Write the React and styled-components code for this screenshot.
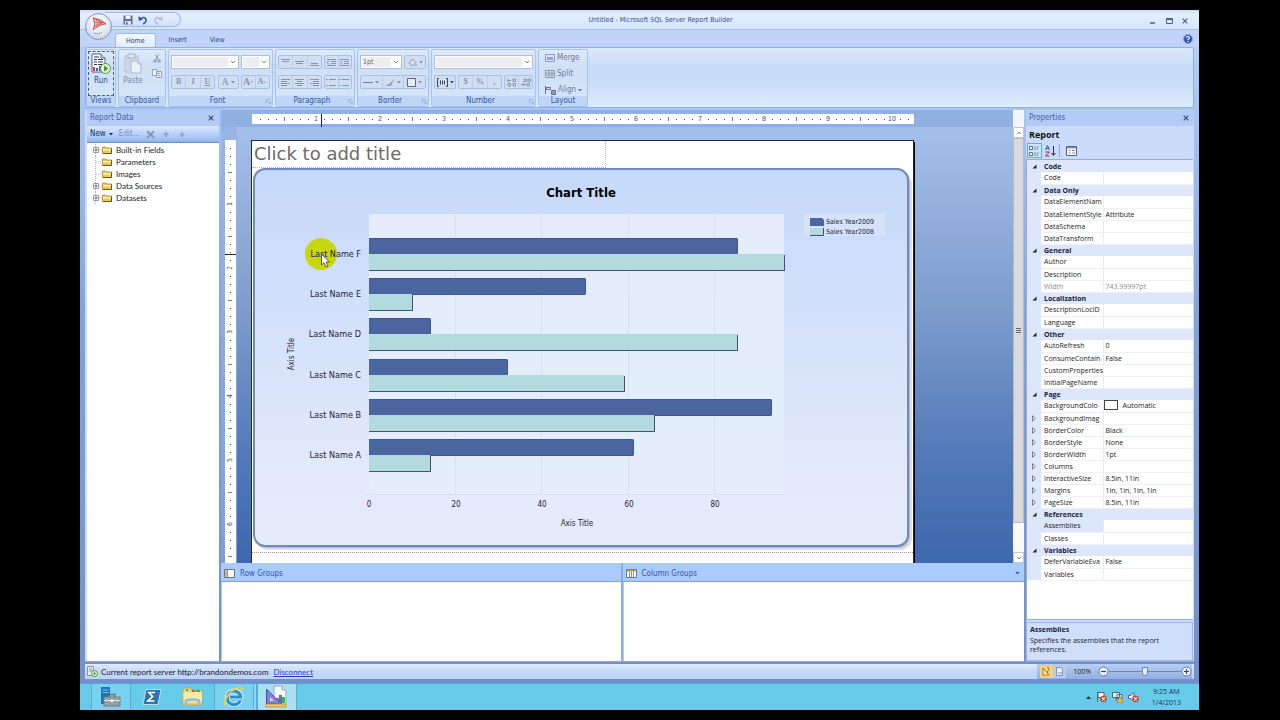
import { useState } from "react";
import { styled, createGlobalStyle, css } from "styled-components";

const TAHOMA = `"DejaVu Sans Condensed", "DejaVu Sans", Tahoma, sans-serif`;
const SEGOE = `"Open Sans", "Noto Sans", sans-serif`;

const GlobalStyle = createGlobalStyle`
    * { box-sizing: border-box; }
    html, body { margin: 0; background: #000; }
    body { font-family: ${TAHOMA}; font-size: 7px; line-height: 10px; color: #222; }
    button, select, input { font: inherit; color: inherit; margin: 0; padding: 0; border: 0; background: none; }
    svg { display: block; flex: none; }
`;

/* ---------- shell ---------- */
const Screen = styled.div`
    display: flex;
    flex-direction: column;
    height: 100vh;
    padding: 10px 81px 10px 80px;
    overflow: hidden;
`;
const Window = styled.div`
    position: relative;
    flex: 1;
    min-height: 0;
    display: flex;
    flex-direction: column;
    padding: 0 5px 4px;
    background: linear-gradient(#bdd3f8 0, #a9c5f4 100px, #84a2dc 300px, #728fcb);
`;
const TitleBar = styled.header`
    display: grid;
    grid-template-columns: 96px 1fr 54px;
    align-items: center;
    height: 20px;
    margin: 0 -5px;
    padding: 0 5px;
    background: linear-gradient(#c9dcfb, #e3eefd 4px, #d7e6fb);
    border-bottom: 1px solid #a3bfee;
`;
const QuickAccess = styled.div`
    display: flex;
    align-items: center;
    gap: 5px;
    height: 15px;
    margin-left: 20px;
    padding-left: 18px;
    border: 1px solid #9db8e6;
    border-left: 0;
    border-radius: 0 8px 8px 0;
    background: linear-gradient(#e8f1fd, #cfe0fa);
`;
const IconButton = styled.button`
    display: grid;
    place-items: center;
    opacity: ${(p) => (p.$faded ? 0.45 : 1)};
`;
const Title = styled.h1`
    margin: 0;
    text-align: center;
    font-size: 7px;
    font-weight: normal;
    color: #2f4f92;
`;
const WindowButtons = styled.div`
    display: flex;
    justify-content: space-between;
    padding: 3px 6px 0 10px;
`;
const Orb = styled.button`
    position: absolute;
    top: 3px;
    left: 5px;
    width: 27px;
    height: 27px;
    border: 1px solid #8497b8;
    border-radius: 50%;
    background: radial-gradient(circle at 50% 35%, #fff, #dfe4ee 60%, #aebbd3);
    display: grid;
    place-items: center;
`;
const TabRow = styled.nav`
    display: flex;
    align-items: flex-end;
    gap: 3px;
    height: 17px;
    margin: 0 -5px;
    padding: 0 6px 0 35px;
    background: #bfd4f8;
`;
const Tab = styled.button`
    height: 14px;
    padding: 0 10px;
    font-size: 7px;
    color: #2a4a8c;
    border-radius: 3px 3px 0 0;
    ${(p) => p.$active && css`
        background: linear-gradient(#f2f7fe, #e0ecfc);
        border: 1px solid #9dbaeb;
        border-bottom: 0;
    `}
`;
const HelpButton = styled(IconButton)`
    margin-left: auto;
    align-self: center;
`;

/* ---------- ribbon ---------- */
const Ribbon = styled.div`
    display: flex;
    gap: 2px;
    height: 61px;
    padding: 1px 1px 0 0;
    border: 1px solid #8eb0e8;
    border-radius: 3px;
    background: linear-gradient(#dbe8fb, #c9dcf7 30%, #c9def8 60%, #ddedfe);
`;
const GroupBox = styled.section`
    display: flex;
    flex-direction: column;
    width: ${(p) => p.$width}px;
    border: 1px solid #a9c4ec;
    border-radius: 2px;
    background: linear-gradient(#dfeafa, #cfdff5 30%, #d6e6fa);
    overflow: hidden;
`;
const bodyPadding = { row: "1px 1px 0", list: "3px 2px 0", tools: "5px 2px 0" };
const GroupBody = styled.div`
    flex: 1;
    min-height: 0;
    display: flex;
    flex-direction: ${(p) => (p.$kind === "row" ? "row" : "column")};
    gap: 6px;
    padding: ${(p) => bodyPadding[p.$kind]};
`;
const GroupLabel = styled.h2`
    margin: 0;
    height: 10px;
    font-size: 8px;
    font-weight: normal;
    line-height: 10px;
    text-align: center;
    color: #2f56a0;
    background: #c0d6f6;
    display: flex;
    align-items: center;
    span { flex: 1; }
`;
const BigButton = styled.button`
    display: flex;
    flex-direction: column;
    align-items: center;
    gap: 2px;
    width: 26px;
    padding-top: 1px;
    font-size: 8px;
    color: ${(p) => (p.$on ? "#2a4a8c" : "#7d8aa5")};
    border: ${(p) => (p.$on ? "1px dashed #4d5f80" : "1px solid transparent")};
`;
const SmallStack = styled.div`
    display: flex;
    flex-direction: column;
    gap: 6px;
    padding-top: 3px;
`;
const ToolRow = styled.div`
    display: flex;
    justify-content: space-between;
    height: 14px;
`;
const ToolSet = styled.div`
    display: flex;
    width: ${(p) => p.$width}px;
    border: 1px solid #a9bfe3;
    border-radius: 2px;
    background: #cfdef3;
`;
const Tool = styled.button`
    flex: 1;
    display: flex;
    align-items: center;
    justify-content: center;
    gap: ${(p) => (p.$tight ? 0 : 2)}px;
    color: ${(p) => (p.$dark ? "#3b4456" : "#8a94a8")};
    border-right: 1px solid #bccde8;
    &:last-child { border-right: 0; }
`;
const Glyph = styled.span`
    font-family: "Liberation Serif", serif;
    font-size: ${(p) => (p.$big ? 10 : 8)}px;
    font-weight: ${(p) => (p.$plain ? "normal" : "bold")};
    font-style: ${(p) => (p.$italic ? "italic" : "normal")};
    text-decoration: ${(p) => (p.$under ? "underline" : "none")};
`;
const ComboBox = styled.div`
    position: relative;
    width: ${(p) => p.$width}px;
    border: 1px solid #aebfda;
    background: #eeeef0;
    box-shadow: inset 0 0 0 1px #fff;
`;
const ComboSelect = styled.select`
    appearance: none;
    display: block;
    width: 100%;
    height: 12px;
    padding-left: 2px;
    color: #666;
`;
const ComboArrow = styled.span`
    position: absolute;
    inset: 0 0 0 auto;
    width: 10px;
    display: grid;
    place-items: center;
    background: #fff;
    pointer-events: none;
`;
const LayoutButton = styled.button`
    display: flex;
    align-items: center;
    gap: 2px;
    height: 10px;
    padding-left: 4px;
    color: #6d7a95;
    font-size: 8px;
`;

/* ---------- work area ---------- */
const Workspace = styled.main`
    flex: 1;
    min-height: 0;
    display: grid;
    grid-template-columns: 134px minmax(0, 1fr) 168px;
    gap: 2px;
    padding: 2px 0;
`;
const Pane = styled.aside`
    display: flex;
    flex-direction: column;
    min-height: 0;
    padding-left: ${(p) => (p.$left ? 2 : 0)}px;
    background: #cbdcfa;
    border-bottom: 1px solid #8fa9dc;
`;
const PaneHeader = styled.div`
    display: flex;
    align-items: center;
    justify-content: space-between;
    height: 16px;
    padding: 0 5px 0 3px;
    color: #4560a8;
    background: #b3cbf5;
`;
const PaneTitle = styled.h2`
    margin: 0;
    font-size: 8px;
    font-weight: normal;
`;
const DataToolbar = styled.div`
    display: flex;
    align-items: center;
    gap: 6px;
    height: 17px;
    padding: 0 3px;
    font-size: 8px;
    color: #1d2f58;
    background: linear-gradient(#dbe8fc, #a9c8f7 70%, #8db3ee);
    border-bottom: 1px solid #6d8dc6;
`;
const DataButton = styled.button`
    display: flex;
    align-items: center;
    gap: 3px;
    color: ${(p) => (p.disabled ? "#8592ad" : "inherit")};
`;
const Tree = styled.ul`
    flex: 1;
    margin: 0;
    padding: 1px 0 0 6px;
    list-style: none;
    background: #fff;
    font-family: Lato, sans-serif;
    font-size: 8px;
`;
const TreeItem = styled.li`
    display: flex;
    align-items: center;
    height: 12px;
`;
const TreeLabel = styled.span`
    margin-left: 4px;
`;

const Center = styled.div`
    display: flex;
    flex-direction: column;
    min-width: 0;
    min-height: 0;
`;
const Designer = styled.div`
    flex: 1;
    min-height: 0;
    display: grid;
    grid-template-columns: 16px minmax(0, 1fr) 11px;
    grid-template-rows: 17px minmax(0, 1fr);
    background: #8fafe0;
`;
const TopRuler = styled.div`
    grid-column: 1 / 3;
    padding: 4px 0 0 31px;
    overflow: hidden;
    background: #90b0e1;
`;
const SideRuler = styled.div`
    padding: 13px 0 0 4px;
    overflow: hidden;
    background: linear-gradient(#98b6e5, #7d9fd6);
`;
const ScrollBar = styled.div`
    grid-column: 3;
    grid-row: 1 / 3;
    display: flex;
    flex-direction: column;
    padding-top: 17px;
    background: #f3f5f9;
`;
const ScrollButton = styled.button`
    display: grid;
    place-items: center;
    height: 11px;
    background: #fff;
    border: 1px solid #c3c9d4;
    color: #555;
`;
const ScrollThumb = styled.div`
    flex: 384;
    display: grid;
    place-items: center;
    background: #d9dadd;
    border: 1px solid #b7bac2;
`;
const ScrollRest = styled.div`
    flex: 29;
    background: #fafafa;
`;
const Surface = styled.div`
    overflow: hidden;
    padding: 13px 0 0 14px;
    background: linear-gradient(#a5bfeb, #97b3e0 15%, #7c9ccc 42%, #5379b8 75%, #3c68ae);
`;
const Paper = styled.div`
    width: 663px;
    height: 100%;
    min-height: 423px;
    background: #fff;
    border: 1px solid #23283a;
    border-bottom: 0;
    box-shadow: 1px 2px 0 #000;
`;
const ReportTitle = styled.div`
    width: 354px;
    height: 27px;
    padding: 0 2px;
    border: 1px dotted #b4b4b4;
    border-width: 0 1px 1px 0;
    font-family: "DejaVu Sans", Verdana, sans-serif;
    font-size: 18px;
    line-height: 26px;
    color: #6c6a66;
`;
const Footer = styled.div`
    border-top: 1px dotted #b08a92;
`;
const ChartSvg = styled.svg`
    text { font-family: ${TAHOMA}; fill: #1d2338; }
`;

const Groups = styled.div`
    display: grid;
    grid-template-columns: 1fr 1fr;
    height: 99px;
    background: #a9cbfd;
    border-bottom: 1px solid #8fa9dc;
`;
const GroupPane = styled.section`
    display: flex;
    flex-direction: column;
    border-right: 2px solid #8fabdf;
    &:last-child { border-right: 0; }
`;
const GroupHead = styled.div`
    display: flex;
    align-items: center;
    gap: 5px;
    height: 19px;
    padding: 3px 4px 0 3px;
    font-size: 8px;
    color: #3259a6;
    border-bottom: 1px solid #7f9fd8;
    svg:last-child { margin-left: ${(p) => (p.$menu ? "auto" : 0)}; }
`;
const GroupList = styled.div`
    flex: 1;
    margin-left: 1px;
    background: #fff;
`;

/* ---------- properties ---------- */
const PropsName = styled.h3`
    margin: 0;
    padding: 2px 3px 0;
    height: 16px;
    font-family: ${SEGOE};
    font-size: 9px;
    line-height: 13px;
    color: #111;
`;
const PropsTools = styled.div`
    display: flex;
    align-items: center;
    gap: 1px;
    height: 17px;
    padding: 0 1px;
`;
const PropTool = styled.button`
    display: grid;
    place-items: center;
    width: 15px;
    height: 15px;
    border: 1px solid ${(p) => (p.$on ? "#58b4d6" : "transparent")};
    background: ${(p) => (p.$on ? "#c9e6f8" : "none")};
`;
const Divider = styled.span`
    width: 1px;
    height: 13px;
    margin-right: 3px;
    background: #8fa9dc;
`;
const GridBox = styled.div`
    flex: 1;
    min-height: 0;
    margin-right: 1px;
    overflow: hidden;
    background: #fff;
    border: 1px solid #93add9;
    border-right: 0;
`;
const PropTable = styled.table`
    width: 100%;
    table-layout: fixed;
    border-collapse: collapse;
    font-family: ${SEGOE};
    font-size: 7px;
    th, td {
        height: 12px;
        padding: 0;
        line-height: 11px;
        text-align: left;
        font-weight: normal;
        white-space: nowrap;
        overflow: hidden;
    }
`;
const Gutter = styled.td`
    background: #dce7fb;
    svg { margin: 0 auto; }
`;
const CategoryName = styled.th`
    &&& { padding-left: 3px; font-weight: bold; background: #dce7fb; color: #1a2238; }
`;
const PropName = styled.th`
    &&& { padding-left: 3px; }
    border-bottom: 1px solid #eef0f4;
    color: ${(p) => (p.$dim ? "#8b8b8b" : "#222")};
    background: ${(p) => (p.$picked ? "#dce7fb" : "none")};
`;
const PropValue = styled.td`
    &&& { padding-left: ${(p) => (p.$swatch ? 0 : 2)}px; }
    border-left: 1px solid #e9ecf2;
    border-bottom: 1px solid #eef0f4;
    color: ${(p) => (p.$dim ? "#8b8b8b" : "#222")};
`;
const Swatch = styled.span`
    display: inline-block;
    width: 14px;
    height: 10px;
    margin-right: 5px;
    vertical-align: top;
    border: 1px solid #444;
    background: #fff;
`;
const Help = styled.div`
    height: 39px;
    margin: 2px 1px 0 0;
    padding: 2px 3px;
    border: 1px solid #9db7e6;
    background: #cfdffa;
    font-family: ${SEGOE};
    line-height: 9px;
    color: #1a2238;
`;
const HelpTitle = styled.h4`
    margin: 0 0 2px;
    font-size: 7px;
`;
const HelpText = styled.p`
    margin: 0;
`;

/* ---------- status bar and taskbar ---------- */
const StatusBar = styled.footer`
    display: flex;
    align-items: center;
    justify-content: space-between;
    height: 15px;
    padding: 0 2px;
    background: linear-gradient(#e1ecfc, #c3d9f9 50%, #bdd4f7);
    font-family: ${SEGOE};
`;
const ServerInfo = styled.div`
    display: flex;
    align-items: center;
    gap: 3px;
    font-family: Lato, sans-serif;
    font-size: 8px;
`;
const ServerLink = styled.a`
    margin-left: 2px;
    color: #2b3fc0;
`;
const ZoomArea = styled.div`
    display: flex;
    align-items: center;
    align-self: stretch;
    gap: 7px;
    padding-left: 3px;
    background: linear-gradient(#b9cef2, #93afe2);
`;
const ViewButtons = styled.div`
    display: flex;
`;
const ViewButton = styled.button`
    display: grid;
    place-items: center;
    width: 13px;
    height: 12px;
    background: ${(p) => (p.$on ? "#fbcf72" : "#b7ccf0")};
`;
const ZoomControl = styled.div`
    display: flex;
    align-items: center;
`;
const ZoomButton = styled.button`
    display: grid;
    place-items: center;
    width: 11px;
    height: 11px;
`;
const ZoomRange = styled.input`
    appearance: none;
    width: 72px;
    height: 10px;
    background: linear-gradient(#6d86b8, #6d86b8) center / 100% 1px no-repeat;
    &::-webkit-slider-thumb {
        appearance: none;
        width: 6px;
        height: 9px;
        border: 1px solid #6d86b8;
        border-radius: 1px 1px 3px 3px;
        background: #e6eefb;
    }
`;
const Taskbar = styled.footer`
    display: flex;
    align-items: stretch;
    height: 27px;
    padding: 0 18px 0 11px;
    background: #66cae9;
    border-top: 1px solid #5f9fd2;
`;
const TaskButton = styled.button`
    display: grid;
    place-items: center;
    width: 40px;
    margin-right: 1px;
    background: ${(p) => (p.$current ? "#a8e1f3" : p.$open ? "#7ad1ed" : "none")};
    border: solid ${(p) => (p.$open ? "#4fb0d6" : "transparent")};
    border-width: 0 1px;
    box-shadow: ${(p) => (p.$stack ? "2px 0 0 #8ad8f0, 3px 0 0 #4fb0d6" : "none")};
    &:last-of-type { margin-left: 2px; }
`;
const Tray = styled.div`
    margin-left: auto;
    display: flex;
    align-items: center;
    gap: 5px;
`;
const Clock = styled.time`
    margin-left: 8px;
    font-family: ${SEGOE};
    font-size: 7px;
    line-height: 11px;
    text-align: center;
    color: #123a52;
`;

/* ---------- icons ---------- */
const Arrow = ({ size = 4, color = "currentColor" }) => (
    <svg width={size} height="3" viewBox="0 0 4 3"><path d="M0 0h4L2 2.5z" fill={color} /></svg>
);
const Cross = ({ size = 6, color = "#3c4c78" }) => (
    <svg width={size} height={size} viewBox="0 0 6 6"><path d="M.7.7l4.6 4.6M5.3.7L.7 5.3" stroke={color} strokeWidth="1.2" /></svg>
);
const Chevron = ({ up, size = 6 }) => (
    <svg width={size} height="4" viewBox="0 0 6 4"><path d={up ? "M1 3.2L3 1l2 2.2" : "M1 .8L3 3 5 .8"} fill="none" stroke="#7c8698" /></svg>
);
const Lines = ({ rows, dots, mark }) => (
    <svg width="11" height="9" viewBox="0 0 11 9" stroke="#8b94a5">
        {rows.map(([x, w], i) => (
            <path key={i} d={`M${x} ${i * 2 + 1.5}h${w}`} />
        ))}
        {dots && <path d="M0 1.5h1.5M0 7.5h1.5" stroke="#6f86b8" />}
        {mark && <path d={mark} fill="none" stroke="#6f86b8" />}
    </svg>
);
const OrbIcon = () => (
    <svg width="21" height="21" viewBox="0 0 21 21" fill="none" stroke="#d2474c">
        <path d="M5 2c6 1 10 3 13 6-4 0-9 2-13 6 2-4 2-8 0-12z" fill="#f7d4d2" />
        <path d="M8 3c2 3 2 6 0 9M11.500 4.500c1.500 2 1.500 4 0 5.500M5 2l13 6M6 6l9 1M6 10l8-3" strokeWidth=".8" />
        <path d="M6 17c3 1.500 6 1 8-1" stroke="#6f7480" strokeDasharray="1.500 1" />
    </svg>
);
const SaveIcon = () => (
    <svg width="10" height="10" viewBox="0 0 10 10">
        <path d="M.5.5h9v9h-9z" fill="#5d6c9c" />
        <path d="M2.500.5h5v3.500h-5z" fill="#eef3fc" />
        <path d="M2 6h6v3.500H2z" fill="#dfe7f6" />
        <path d="M3 7h1.500v2.500H3z" fill="#4a5788" />
    </svg>
);
const UndoIcon = ({ flip }) => (
    <svg width="10" height="10" viewBox="0 0 10 10">
        <g transform={flip ? "translate(10 0) scale(-1 1)" : undefined}>
            <path d="M2 4.500C4 1.500 8.500 2 8 5.500 7.800 7.500 6.500 8.500 5 9" fill="none" stroke={flip ? "#7f90b5" : "#3058b8"} strokeWidth="1.600" />
            <path d="M.5 1l.2 5 4.300-1.500z" fill={flip ? "#7f90b5" : "#3058b8"} />
        </g>
    </svg>
);
const RunIcon = () => (
    <svg width="20" height="21" viewBox="0 0 20 21">
        <path d="M1 1h9l4 4v14H1z" fill="#fff" stroke="#5c6370" />
        <path d="M10 1v4h4" fill="#d6dbe4" stroke="#5c6370" />
        <path d="M3 4h5M3 6.500h3M7 6.500h5M3 9h3M7 9h5M3 11.500h3M7 11.500h5" stroke="#2e3440" strokeWidth="1.200" />
        <path d="M2 14h2v4H2z" fill="#d23b3b" />
        <path d="M5 15h2v3H5z" fill="#2f62c9" />
        <path d="M8 13h2v5H8z" fill="#2f62c9" />
        <circle cx="14.500" cy="15.500" r="5" fill="#e7f6df" stroke="#4c9a3c" />
        <path d="M13 12.500v6l4.500-3z" fill="#3d9c2d" />
    </svg>
);
const PasteIcon = () => (
    <svg width="20" height="21" viewBox="0 0 20 21" opacity=".65">
        <path d="M2 3h13v16H2z" fill="#cdd2dc" stroke="#a9b1c2" />
        <path d="M5 1h7v4H5z" fill="#e6e9ef" stroke="#8d96aa" />
        <path d="M8 8h7l3 3v9H8z" fill="#f7f9fc" stroke="#98a3b8" />
        <path d="M15 8v3h3" fill="none" stroke="#98a3b8" />
    </svg>
);
const CutIcon = () => (
    <svg width="8" height="9" viewBox="0 0 8 9" fill="none" stroke="#8d97ab">
        <path d="M2.500.5l3 5.500M5.500.5l-3 5.500" />
        <circle cx="2" cy="7" r="1.300" /><circle cx="6" cy="7" r="1.300" />
    </svg>
);
const CopyIcon = () => (
    <svg width="10" height="9" viewBox="0 0 10 9" fill="#eef2f9" stroke="#98a3b8">
        <path d="M.5.5h4.500v6H.5zM4.500 2.500h5v6h-5z" /><path d="M6 4.500h2M6 6.500h2" />
    </svg>
);
const Launcher = () => (
    <svg width="6" height="5" viewBox="0 0 6 5" stroke="#9bb4dd" fill="none"><path d="M.5 4V.5H4M2 2l2.500 2.500M4.500 2.500v2h-2" /></svg>
);
const CellsIcon = ({ kind }) => (
    <svg width="10" height="8" viewBox="0 0 10 8">
        <path d="M.5.5h9v7h-9z" fill="#dbe5f5" stroke="#8f9bb5" />
        {kind === "merge" && <path d="M2 3h6v3H2z" fill="#8fa9d9" />}
        {kind === "split" && <path d="M1 3h8M1 5h8M4 1v6M7 1v6" stroke="#8f9bb5" />}
    </svg>
);
const AlignIcon = () => (
    <svg width="11" height="9" viewBox="0 0 11 9" fill="#dbe5f5" stroke="#66718c">
        <path d="M.5 0v8M1.500 1.500h4v2h-4z" /><path d="M6.500 4.500h4v4h-4z" fill="#8f9bb5" />
    </svg>
);
const FolderIcon = () => (
    <svg width="10" height="8" viewBox="0 0 10 8">
        <path d="M.5 1h3.500l1 1h4.500v5.500h-9z" fill="#e9c95c" stroke="#b48a2a" strokeWidth=".8" />
        <path d="M1 3h8v1.500H1z" fill="#fdf0b4" />
        <path d="M1 7.500h8.500V2.500" fill="none" stroke="#6b5220" />
    </svg>
);
const Expander = ({ leaf }) => (
    <svg width="9" height="12" viewBox="0 0 9 12">
        <path d={leaf ? "M2.500 0v12M3 6h6" : "M2.500 0v3M2.500 9v3M6 6h3"} stroke="#b5b5b5" strokeDasharray="1 1" />
        {!leaf && <path d="M.5 3.500h5v5h-5z" fill="#fff" stroke="#9a9a9a" />}
        {!leaf && <path d="M1.500 6h3M3 4.500v3" stroke="#444" strokeWidth=".8" />}
    </svg>
);
const MoveIcon = ({ down }) => (
    <svg width="10" height="7" viewBox="-2 0 10 7"><path d={down ? "M2 1h2v2h2L3 6.500 0 3h2z" : "M3 .5L6 4H4v2H2V4H0z"} fill="#94a5c8" /></svg>
);
const TableIcon = ({ cols }) => (
    <svg width="11" height="9" viewBox="0 0 11 9">
        <path d="M.5.5h10v8H.5z" fill="#fff" stroke="#6d7484" />
        {cols ? <path d="M1 1h9v1.500H1z" fill="#c7a54d" /> : <path d="M1 1h2v7H1z" fill="#d7b98a" />}
        <path d={cols ? "M3.500 2v6M5.500 2v6M7.500 2v6" : "M3.500 1v7"} stroke="#8c93a3" />
    </svg>
);
const CategoryArrow = () => (
    <svg width="5" height="5" viewBox="0 0 5 5"><path d="M4.500.5v4h-4z" fill="#222" /></svg>
);
const ClosedArrow = () => (
    <svg width="4" height="7" viewBox="0 0 4 7"><path d="M.5.8v5.400L3.300 3.500z" fill="#fff" stroke="#555" strokeWidth=".8" /></svg>
);
const CategorizedIcon = () => (
    <svg width="11" height="10" viewBox="0 0 11 10" fill="#fff" stroke="#5b6b93">
        <path d="M.5.5h3v3h-3zM.5 6.500h3v3h-3z" /><path d="M5 1h2M8 1h2M5 3h4M5 7h2M8 7h2M5 9h4" stroke="#7b88a8" />
    </svg>
);
const PagesIcon = () => (
    <svg width="11" height="10" viewBox="0 0 11 10">
        <path d="M.5.5h10v9H.5z" fill="#fff" stroke="#56627c" /><path d="M1 1h9v1.500H1z" fill="#7e93c4" />
        <path d="M2.500 4.500h2M6 4.500h3M2.500 7h2M6 7h3" stroke="#7b88a8" />
    </svg>
);
const ServerIcon = () => (
    <svg width="11" height="11" viewBox="0 0 11 11">
        <path d="M.5.5h6v9h-6z" fill="#e9edf3" stroke="#8790a0" /><path d="M2 3h3M2 5h3" stroke="#8790a0" />
        <circle cx="7.500" cy="7.500" r="3" fill="#e0f3d8" stroke="#4c9a3c" /><path d="M6.700 5.800v3.400l2.400-1.700z" fill="#3d9c2d" />
    </svg>
);
const RoundIcon = ({ plus }) => (
    <svg width="11" height="11" viewBox="0 0 11 11">
        <circle cx="5.500" cy="5.500" r="4.500" fill="#eef4fd" stroke="#5d76ab" />
        <path d={plus ? "M3 5.500h5M5.500 3v5" : "M3 5.500h5"} stroke="#33466f" strokeWidth="1.200" />
    </svg>
);

/* ---------- taskbar icons ---------- */
const ServerManagerIcon = () => (
    <svg width="22" height="22" viewBox="0 0 22 22">
        <path d="M1 1h9v17H1z" fill="#1976b8" /><path d="M2.500 4h6M2.500 6.500h6" stroke="#7fc0e6" />
        <path d="M9 11V8.500h6V11" fill="none" stroke="#666d74" strokeWidth="1.300" />
        <path d="M4 11h16v9H4z" fill="#98a0a8" stroke="#737b83" /><path d="M4 14.500h16" stroke="#e2e5e8" /><path d="M11 13.500h2v2.500h-2z" fill="#fff" />
    </svg>
);
const PowerShellIcon = () => (
    <svg width="20" height="18" viewBox="0 0 20 18">
        <path d="M4 1.500h15L16 16.500H1z" fill="#2d74ad" stroke="#bfe0f2" />
        <path d="M13 4.500H7l3.500 4L6 13h6.500" fill="none" stroke="#fff" strokeWidth="1.700" />
    </svg>
);
const ExplorerIcon = () => (
    <svg width="22" height="20" viewBox="0 0 22 20">
        <path d="M1 3l2-2h6l1 2h10v15H1z" fill="#ecd27a" stroke="#c7a445" strokeWidth=".8" />
        <path d="M4 2h2v2H4zM14 3h4v2h-4z" fill="#4caf50" /><path d="M10 3h3v2h-3z" fill="#d9534f" />
        <path d="M1.500 5h18.500v10H1.500z" fill="#f8e7a6" />
        <path d="M4 19v-5c0-2 13-2 13 0v5" fill="none" stroke="#8dbfdd" strokeWidth="2.500" />
    </svg>
);
const IeIcon = () => (
    <svg width="22" height="22" viewBox="0 0 22 22" fill="none">
        <path d="M17.500 14.500A7 7 0 1 1 18 10.800H7" stroke="#d9f2fc" strokeWidth="4.600" />
        <path d="M17.300 14.500A6.800 6.800 0 1 1 17.800 11H7" stroke="#2a8ed0" strokeWidth="3" />
        <path d="M2.500 20C-.5 17 5 6 13 2.500c3.500-1.500 6.500-1 6 2" stroke="#f2cf3c" strokeWidth="1.800" />
    </svg>
);
const ReportBuilderIcon = () => (
    <svg width="24" height="24" viewBox="0 0 24 24">
        <path d="M9 1h8l4 4v14H9z" fill="#f6f8fb" stroke="#9aa6b6" /><path d="M17 1v4h4" fill="#d8dee8" stroke="#9aa6b6" />
        <path d="M11 13h3v5h-3z" fill="#e25b46" /><path d="M14 10h3v8h-3z" fill="#3a7bd5" /><path d="M17 12h3v6h-3z" fill="#3fae49" />
        <path d="M1.500 4v15h15z" fill="#7d83d6" stroke="#454bb0" /><path d="M5 12v4h4z" fill="#d6d8f6" />
        <path d="M1 19h20v3H1z" fill="#ecc56a" stroke="#b58d38" strokeWidth=".7" />
    </svg>
);
const TrayIcon = ({ kind }) => (
    <svg width="11" height="12" viewBox="0 0 11 12">
        {kind === "flag" && <path d="M1.500 1v10M2 1.500h6v5H2z" fill="#f4f8fa" stroke="#47687a" />}
        {kind === "net" && <path d="M.5 1.500h7v5h-7zM4 7v3M5 3.500h5v4H5z" fill="#e9eff2" stroke="#47687a" />}
        {kind === "sound" && <path d="M.5 4.500H3L6 1.500v9L3 7.500H.5z" fill="#f4f8fa" stroke="#47687a" />}
        {kind === "net" ? (
            <path d="M8 5.500L11 11.500H5z" fill="#f5c33b" stroke="#a87710" strokeWidth=".6" />
        ) : (
            <g><circle cx="7.500" cy="8" r="3.300" fill="#df3a34" /><path d="M6 6.500l3 3M9 6.500l-3 3" stroke="#fff" strokeWidth="1.100" /></g>
        )}
    </svg>
);

/* ---------- ruler: 64px for one inch, a mark every 8px ---------- */
function Ruler({ length, vertical, pointer }) {
    const marks = [];
    for (let p = 8; p < length - 2; p += 8) marks.push(p);
    return (
        <svg width={vertical ? 11 : length} height={vertical ? length : 13}>
            <rect width={vertical ? 11 : length} height={vertical ? length : 10} fill="#fff" />
            {marks.map((p) => {
                if (p % 64 === 0) {
                    return (
                        <text key={p} x={vertical ? 0 : p} y={vertical ? 0 : 7} fontSize="7" textAnchor="middle" fill="#4c5260"
                            transform={vertical ? `translate(7 ${p}) rotate(-90)` : undefined}>{p / 64}</text>
                    );
                }
                const half = p % 32 === 0;
                const d = vertical ? `M${half ? 3 : 5} ${p + 0.5}h${half ? 4 : 1}` : `M${p + 0.5} ${half ? 3 : 5}v${half ? 4 : 1}`;
                return <path key={p} d={d} stroke={half ? "#6d7484" : "#555"} />;
            })}
            <path d={vertical ? `M0 ${pointer}h11` : `M${pointer} 0v13`} stroke="#222" />
        </svg>
    );
}

/* ---------- chart ---------- */
const sales = [
    { name: "Last Name F", y2009: 85, y2008: 96 },
    { name: "Last Name E", y2009: 50, y2008: 10 },
    { name: "Last Name D", y2009: 14, y2008: 85 },
    { name: "Last Name C", y2009: 32, y2008: 59 },
    { name: "Last Name B", y2009: 93, y2008: 66 },
    { name: "Last Name A", y2009: 61, y2008: 14 },
];
const LEFT = 117;
const scale = (v) => Math.round(v * 4.325);

function Chart() {
    return (
        <ChartSvg width="660" height="384" role="img" aria-label="Chart Title">
            <defs>
                <linearGradient id="back" x1="0" y1="0" x2="0" y2="1">
                    <stop offset="0" stopColor="#c5d9f9" />
                    <stop offset=".85" stopColor="#e4eafb" />
                    <stop offset="1" stopColor="#e6ebfb" />
                </linearGradient>
                <linearGradient id="plot" x1="0" y1="0" x2="0" y2="1">
                    <stop offset="0" stopColor="#e5ebfb" />
                    <stop offset=".6" stopColor="#e3eefb" />
                    <stop offset="1" stopColor="#e3edfb" />
                </linearGradient>
            </defs>
            <rect x="4" y="4" width="656" height="378" rx="12" fill="#dddfe6" />
            <rect x="3" y="3" width="655" height="377" rx="12" fill="#b4b9c8" />
            <rect x="2" y="1" width="654" height="377" rx="11" fill="url(#back)" stroke="#6f8bbd" strokeWidth="2" />
            <text x="329" y="29" fontSize="13" fontWeight="bold" textAnchor="middle" style={{ fill: "#000" }}>Chart Title</text>
            <rect x={LEFT} y="46" width="415" height="281" fill="url(#plot)" />
            {[20, 40, 60, 80].map((v) => (
                <path key={v} d={`M${LEFT + scale(v) - 0.5} 46v281`} stroke="#d8e1f0" />
            ))}
            <path d={`M${LEFT - 5} 326.500h420`} stroke="#d8e1f0" />
            <circle cx="69" cy="86" r="16" fill="#c8d60c" />
            {sales.map((s, i) => {
                const y = 70 + Math.round(i * 40.2);
                const a = scale(s.y2009) + 1;
                const b = scale(s.y2008);
                return (
                    <g key={s.name}>
                        <path d={`M${LEFT} ${y}h${a - 1}l1 1v15l-1 1H${LEFT}z`} fill="#4b65a0" />
                        <path d={`M${LEFT} ${y + 0.5}h${a - 1}M${LEFT} ${y + 16.5}h${a - 1}M${LEFT + a - 0.5} ${y + 1}v15`} stroke="#41568c" fill="none" />
                        <rect x={LEFT} y={y + 16} width={b} height="16" fill="#b3dade" />
                        <path d={`M${LEFT} ${y + 32.5}h${b + 1}M${LEFT + b + 0.5} ${y + 17}v16`} stroke="#435468" fill="none" />
                        <path d={`M${LEFT - 5} ${y + 16.5}h5`} stroke="#d5deee" />
                        <text x="109" y={y + 19} fontSize="9" textAnchor="end">{s.name}</text>
                    </g>
                );
            })}
            {[0, 20, 40, 60, 80].map((v) => (
                <text key={v} x={LEFT + scale(v)} y="339" fontSize="8" textAnchor="middle">{v}</text>
            ))}
            <text x="325" y="358" fontSize="8" textAnchor="middle">Axis Title</text>
            <text transform="translate(42 186) rotate(-90)" fontSize="8" textAnchor="middle">Axis Title</text>
            <rect x="552" y="46" width="81" height="22" fill="#d6e2fa" />
            <path d="M558 50h12l2 2v6h-14z" fill="#4b65a0" />
            <text x="574" y="56" fontSize="7">Sales Year2009</text>
            <rect x="558" y="60" width="13" height="7" fill="#b3dade" />
            <path d="M558 67.500h13.500V60" stroke="#435468" fill="none" />
            <text x="574" y="66" fontSize="7">Sales Year2008</text>
            <path d="M69.500 86v11l2.500-2.300 2 4.300 2-1-2-4h3.500z" fill="#fff" stroke="#333" strokeWidth=".8" />
        </ChartSvg>
    );
}

/* ---------- properties data: [name, value, options] ---------- */
const properties = [
    ["Code", [["Code", ""]]],
    ["Data Only", [["DataElementNam", ""], ["DataElementStyle", "Attribute"], ["DataSchema", ""], ["DataTransform", ""]]],
    ["General", [["Author", ""], ["Description", ""], ["Width", "743.99997pt", { dim: true }]]],
    ["Localization", [["DescriptionLocID", ""], ["Language", ""]]],
    ["Other", [["AutoRefresh", "0"], ["ConsumeContain", "False"], ["CustomProperties", ""], ["InitialPageName", ""]]],
    ["Page", [
        ["BackgroundColo", "Automatic", { swatch: true }],
        ["BackgroundImag", "", { opens: true }],
        ["BorderColor", "Black", { opens: true }],
        ["BorderStyle", "None", { opens: true }],
        ["BorderWidth", "1pt", { opens: true }],
        ["Columns", "", { opens: true }],
        ["InteractiveSize", "8.5in, 11in", { opens: true }],
        ["Margins", "1in, 1in, 1in, 1in", { opens: true }],
        ["PageSize", "8.5in, 11in", { opens: true }],
    ]],
    ["References", [["Assemblies", "", { picked: true }], ["Classes", ""]]],
    ["Variables", [["DeferVariableEva", "False"], ["Variables", ""]]],
];

const sources = [
    { name: "Built-in Fields" },
    { name: "Parameters", leaf: true },
    { name: "Images", leaf: true },
    { name: "Data Sources" },
    { name: "Datasets" },
];

function Combo({ label, width, value = "" }) {
    return (
        <ComboBox $width={width}>
            <ComboSelect aria-label={label} defaultValue={value}>
                <option>{value}</option>
            </ComboSelect>
            <ComboArrow><Chevron /></ComboArrow>
        </ComboBox>
    );
}

function Group({ name, width, kind = "tools", launcher, children }) {
    return (
        <GroupBox $width={width}>
            <GroupBody $kind={kind}>{children}</GroupBody>
            <GroupLabel><span>{name}</span>{launcher && <Launcher />}</GroupLabel>
        </GroupBox>
    );
}

function RibbonBar() {
    return (
        <Ribbon>
            <Group name="Views" width={30} kind="row">
                <BigButton $on><RunIcon />Run</BigButton>
            </Group>
            <Group name="Clipboard" width={48} kind="row">
                <BigButton><PasteIcon />Paste</BigButton>
                <SmallStack>
                    <IconButton aria-label="Cut"><CutIcon /></IconButton>
                    <IconButton aria-label="Copy"><CopyIcon /></IconButton>
                </SmallStack>
            </Group>
            <Group name="Font" width={105} launcher>
                <ToolRow>
                    <Combo label="Font" width={68} />
                    <Combo label="Font size" width={29} />
                </ToolRow>
                <ToolRow>
                    <ToolSet $width={44}>
                        <Tool><Glyph>B</Glyph></Tool>
                        <Tool><Glyph $italic>I</Glyph></Tool>
                        <Tool><Glyph $under>U</Glyph></Tool>
                    </ToolSet>
                    <ToolSet $width={21}>
                        <Tool><Glyph $big $plain>A</Glyph><Arrow /></Tool>
                    </ToolSet>
                    <ToolSet $width={29}>
                        <Tool $tight aria-label="Grow font"><Glyph $big>A</Glyph><Chevron up size={4} /></Tool>
                        <Tool $tight aria-label="Shrink font"><Glyph>A</Glyph><Chevron size={4} /></Tool>
                    </ToolSet>
                </ToolRow>
            </Group>
            <Group name="Paragraph" width={80} launcher>
                <ToolRow>
                    <ToolSet $width={44}>
                        <Tool aria-label="Top"><Lines rows={[[1, 9], [2, 7]]} /></Tool>
                        <Tool aria-label="Middle"><Lines rows={[[0, 0], [1, 9], [2, 7]]} /></Tool>
                        <Tool aria-label="Bottom"><Lines rows={[[0, 0], [0, 0], [2, 7], [1, 9]]} /></Tool>
                    </ToolSet>
                    <ToolSet $width={28}>
                        <Tool aria-label="Decrease indent"><Lines rows={[[1, 9], [5, 5], [5, 5], [1, 9]]} mark="M3 2.500L1 4.500l2 2" /></Tool>
                        <Tool aria-label="Increase indent"><Lines rows={[[1, 9], [5, 5], [5, 5], [1, 9]]} mark="M1 2.500l2 2-2 2" /></Tool>
                    </ToolSet>
                </ToolRow>
                <ToolRow>
                    <ToolSet $width={44}>
                        <Tool aria-label="Left"><Lines rows={[[1, 9], [1, 6], [1, 9], [1, 6]]} /></Tool>
                        <Tool aria-label="Center"><Lines rows={[[1, 9], [3, 5], [1, 9], [3, 5]]} /></Tool>
                        <Tool aria-label="Right"><Lines rows={[[1, 9], [4, 6], [1, 9], [4, 6]]} /></Tool>
                    </ToolSet>
                    <ToolSet $width={28}>
                        <Tool aria-label="Bullets"><Lines dots rows={[[3, 7], [0, 0], [0, 0], [3, 7]]} /></Tool>
                        <Tool aria-label="Numbering"><Lines dots rows={[[3, 7], [0, 0], [0, 0], [3, 7]]} /></Tool>
                    </ToolSet>
                </ToolRow>
            </Group>
            <Group name="Border" width={72} launcher>
                <ToolRow>
                    <Combo label="Border width" width={42} value="1pt" />
                    <ToolSet $width={22}>
                        <Tool aria-label="Fill">
                            <svg width="9" height="9" viewBox="0 0 9 9" fill="#dbe2ee" stroke="#8a94a8"><path d="M1 5l3.500-4L8 4.500 4.500 8zM8 6v2" /></svg>
                            <Arrow />
                        </Tool>
                    </ToolSet>
                </ToolRow>
                <ToolRow>
                    <ToolSet $width={66}>
                        <Tool aria-label="Line style"><svg width="10" height="9"><path d="M0 4.500h10" stroke="#777f90" /></svg><Arrow /></Tool>
                        <Tool aria-label="Line color"><svg width="10" height="9"><path d="M0 8h6L9 1 4 6z" fill="#97a1b4" /></svg><Arrow /></Tool>
                        <Tool aria-label="Borders"><svg width="9" height="9"><path d="M.5.5h8v8h-8z" fill="#e7eefa" stroke="#5c6680" /></svg><Arrow /></Tool>
                    </ToolSet>
                </ToolRow>
            </Group>
            <Group name="Number" width={105} launcher>
                <ToolRow><Combo label="Format" width={99} /></ToolRow>
                <ToolRow>
                    <ToolSet $width={22}>
                        <Tool $dark aria-label="Placeholder">
                            <svg width="11" height="9" viewBox="0 0 11 9" fill="none" stroke="#3b4456"><path d="M2 .5H.5v8H2M9 .5h1.500v8H9M3.500 2.500v4M5.500 2.500v4M7.500 2.500v4" /></svg>
                            <Arrow />
                        </Tool>
                    </ToolSet>
                    <ToolSet $width={44}>
                        <Tool><Glyph>$</Glyph></Tool>
                        <Tool><Glyph>%</Glyph></Tool>
                        <Tool><Glyph>,</Glyph></Tool>
                    </ToolSet>
                    <ToolSet $width={29}>
                        <Tool aria-label="Increase decimals"><svg width="10" height="9" fill="none" stroke="#8a94a8"><path d="M0 2.500h4M2 .5L0 2.500l2 2M6 1h2.500v2.500H6zM1 5.500h2.500V8H1zM6 5.500h2.500V8H6z" /></svg></Tool>
                        <Tool aria-label="Decrease decimals"><svg width="10" height="9" fill="none" stroke="#8a94a8"><path d="M3 1h2.500v2.500H3zM7 1h2.500v2.500H7zM0 6.500h4M2 4.500l2 2-2 2M6 5.500h2.500V8H6z" /></svg></Tool>
                    </ToolSet>
                </ToolRow>
            </Group>
            <Group name="Layout" width={50} kind="list">
                <LayoutButton><CellsIcon kind="merge" />Merge</LayoutButton>
                <LayoutButton><CellsIcon kind="split" />Split</LayoutButton>
                <LayoutButton><AlignIcon />Align<Arrow /></LayoutButton>
            </Group>
        </Ribbon>
    );
}

function ReportData() {
    return (
        <Pane $left>
            <PaneHeader>
                <PaneTitle>Report Data</PaneTitle>
                <IconButton aria-label="Close report data"><Cross /></IconButton>
            </PaneHeader>
            <DataToolbar>
                <DataButton>New<Arrow /></DataButton>
                <DataButton disabled>Edit...</DataButton>
                <DataButton disabled aria-label="Delete"><Cross size={9} color="#8592ad" /></DataButton>
                <DataButton disabled aria-label="Move up"><MoveIcon /></DataButton>
                <DataButton disabled aria-label="Move down"><MoveIcon down /></DataButton>
            </DataToolbar>
            <Tree>
                {sources.map((s) => (
                    <TreeItem key={s.name}><Expander leaf={s.leaf} /><FolderIcon /><TreeLabel>{s.name}</TreeLabel></TreeItem>
                ))}
            </Tree>
        </Pane>
    );
}

function Properties() {
    return (
        <Pane>
            <PaneHeader>
                <PaneTitle>Properties</PaneTitle>
                <IconButton aria-label="Close properties"><Cross /></IconButton>
            </PaneHeader>
            <PropsName>Report</PropsName>
            <PropsTools>
                <PropTool $on aria-label="Categorized"><CategorizedIcon /></PropTool>
                <PropTool aria-label="Alphabetical">
                    <svg width="11" height="12" viewBox="0 0 11 12" fill="none">
                        <path d="M.5 5L2.500.5 4.500 5M1 3.500h3" stroke="#3a55b5" />
                        <path d="M.5 7h4L.5 11h4" stroke="#8c3a5a" />
                        <path d="M8.500 1v9M6.500 8l2 2.500 2-2.500" stroke="#333" />
                    </svg>
                </PropTool>
                <Divider />
                <PropTool aria-label="Property pages"><PagesIcon /></PropTool>
            </PropsTools>
            <GridBox>
                <PropTable>
                    <colgroup><col width="14" /><col width="62" /><col /></colgroup>
                    {properties.map(([category, rows]) => (
                        <tbody key={category}>
                            <tr>
                                <Gutter><CategoryArrow /></Gutter>
                                <CategoryName colSpan="2">{category}</CategoryName>
                            </tr>
                            {rows.map(([name, value, o = {}]) => (
                                <tr key={name}>
                                    <Gutter>{o.opens && <ClosedArrow />}</Gutter>
                                    <PropName scope="row" $dim={o.dim} $picked={o.picked}>{name}</PropName>
                                    <PropValue $dim={o.dim} $swatch={o.swatch}>{o.swatch && <Swatch />}{value}</PropValue>
                                </tr>
                            ))}
                        </tbody>
                    ))}
                </PropTable>
            </GridBox>
            <Help>
                <HelpTitle>Assemblies</HelpTitle>
                <HelpText>Specifies the assemblies that the report references.</HelpText>
            </Help>
        </Pane>
    );
}

export default function App() {
    const [tab, setTab] = useState("Home");
    const [zoom, setZoom] = useState(100);
    return (
        <Screen>
            <GlobalStyle />
            <Window>
                <TitleBar>
                    <QuickAccess>
                        <IconButton aria-label="Save"><SaveIcon /></IconButton>
                        <IconButton aria-label="Undo"><UndoIcon /></IconButton>
                        <IconButton aria-label="Redo" $faded><UndoIcon flip /></IconButton>
                    </QuickAccess>
                    <Title>Untitled - Microsoft SQL Server Report Builder</Title>
                    <WindowButtons>
                        <IconButton aria-label="Minimize"><svg width="6" height="6"><path d="M0 5h5" stroke="#4a5e8e" strokeWidth="1.500" /></svg></IconButton>
                        <IconButton aria-label="Maximize"><svg width="7" height="6"><path d="M.5.5h6v5h-6zM0 1.500h7" fill="none" stroke="#4a5e8e" /></svg></IconButton>
                        <IconButton aria-label="Close"><Cross color="#4a5e8e" /></IconButton>
                    </WindowButtons>
                </TitleBar>
                <TabRow>
                    {["Home", "Insert", "View"].map((t) => (
                        <Tab key={t} $active={t === tab} onClick={() => setTab(t)}>{t}</Tab>
                    ))}
                    <HelpButton aria-label="Help">
                        <svg width="10" height="10" viewBox="0 0 10 10">
                            <circle cx="5" cy="5" r="4.500" fill="#3558b5" stroke="#8aa3dc" />
                            <path d="M3.500 3.800C3.500 2 6.500 2 6.500 3.800 6.500 4.800 5 4.800 5 6M5 7v1" fill="none" stroke="#fff" strokeWidth="1.100" />
                        </svg>
                    </HelpButton>
                </TabRow>
                <RibbonBar />
                <Orb aria-label="Menu"><OrbIcon /></Orb>
                <Workspace>
                    <ReportData />
                    <Center>
                        <Designer>
                            <TopRuler><Ruler length={662} pointer={69.5} /></TopRuler>
                            <SideRuler><Ruler vertical length={423} pointer={114.5} /></SideRuler>
                            <Surface>
                                <Paper>
                                    <ReportTitle>Click to add title</ReportTitle>
                                    <Chart />
                                    <Footer />
                                </Paper>
                            </Surface>
                            <ScrollBar>
                                <ScrollButton aria-label="Scroll up"><Chevron up /></ScrollButton>
                                <ScrollThumb><svg width="5" height="5" stroke="#666"><path d="M0 .5h5M0 2.500h5M0 4.500h5" /></svg></ScrollThumb>
                                <ScrollRest />
                                <ScrollButton aria-label="Scroll down"><Chevron /></ScrollButton>
                            </ScrollBar>
                        </Designer>
                        <Groups>
                            <GroupPane>
                                <GroupHead><TableIcon />Row Groups</GroupHead>
                                <GroupList />
                            </GroupPane>
                            <GroupPane>
                                <GroupHead $menu><TableIcon cols />Column Groups<Arrow size={5} /></GroupHead>
                                <GroupList />
                            </GroupPane>
                        </Groups>
                    </Center>
                    <Properties />
                </Workspace>
                <StatusBar>
                    <ServerInfo>
                        <ServerIcon />
                        <span>Current report server http://brandondemos.com</span>
                        <ServerLink href="#disconnect">Disconnect</ServerLink>
                    </ServerInfo>
                    <ZoomArea>
                        <ViewButtons>
                            <ViewButton $on aria-label="Design"><svg width="9" height="9"><path d="M1 1v7h6zM5 1h2L5 6" fill="#fff3cf" stroke="#a8702a" /></svg></ViewButton>
                            <ViewButton aria-label="Preview"><svg width="9" height="9"><path d="M1.500.5h4l2 2v6h-6zM3 6h4" fill="#edf2fb" stroke="#7d8fb6" /></svg></ViewButton>
                        </ViewButtons>
                        <span>{zoom}%</span>
                        <ZoomControl>
                            <ZoomButton aria-label="Zoom out" onClick={() => setZoom(Math.max(0, zoom - 10))}><RoundIcon /></ZoomButton>
                            <ZoomRange type="range" aria-label="Zoom" min="0" max="200" value={zoom} onChange={(e) => setZoom(Number(e.target.value))} />
                            <ZoomButton aria-label="Zoom in" onClick={() => setZoom(Math.min(200, zoom + 10))}><RoundIcon plus /></ZoomButton>
                        </ZoomControl>
                    </ZoomArea>
                </StatusBar>
            </Window>
            <Taskbar>
                <TaskButton $open aria-label="Server Manager"><ServerManagerIcon /></TaskButton>
                <TaskButton aria-label="PowerShell"><PowerShellIcon /></TaskButton>
                <TaskButton aria-label="Explorer"><ExplorerIcon /></TaskButton>
                <TaskButton $open $stack aria-label="Internet Explorer"><IeIcon /></TaskButton>
                <TaskButton $open $current aria-label="Report Builder"><ReportBuilderIcon /></TaskButton>
                <Tray>
                    <svg width="5" height="3"><path d="M0 3h5L2.500 0z" fill="#123a52" /></svg>
                    <TrayIcon kind="flag" />
                    <TrayIcon kind="net" />
                    <TrayIcon kind="sound" />
                    <Clock>9:25 AM<br />1/4/2013</Clock>
                </Tray>
            </Taskbar>
        </Screen>
    );
}
